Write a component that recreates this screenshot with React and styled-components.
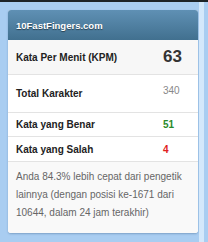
import styled, { createGlobalStyle } from "styled-components";

const Global = createGlobalStyle`
  html, body {
    margin: 0;
    padding: 0;
    background: #a9cdf1;
    font-family: "Liberation Sans", Arial, sans-serif;
  }
`;

const Page = styled.div`
  width: 208px;
  height: 242px;
  display: flex;
  flex-direction: column;
  overflow: hidden;
`;

const TopLine = styled.div`
  height: 2px;
  background: #1d2328;
`;

const Body = styled.div`
  flex: 1;
  display: flex;
`;

const Column = styled.div`
  width: 199px;
  padding: 8px 0 0 8px;
  box-sizing: border-box;
`;

const Strip = styled.div`
  width: 5px;
  background: #d4e8fb;
`;

const Card = styled.div`
  width: 190px;
  background: #fff;
  border-radius: 3px;
  box-shadow: 0 1px 2px rgba(40, 80, 120, 0.35);
  overflow: hidden;
`;

const Header = styled.div`
  height: 30px;
  display: flex;
  align-items: center;
  padding-left: 8px;
  background: linear-gradient(#5f90b4, #41708f);
  color: #fff;
  font-weight: bold;
  font-size: 9.5px;
  text-shadow: 0 1px 1px rgba(0, 0, 0, 0.5);
`;

const Row = styled.div`
  height: ${(p) => p.h}px;
  display: flex;
  align-items: center;
  justify-content: space-between;
  padding: 0 0 0 8px;
  border-bottom: 1px solid #e3e3e3;
  background: ${(p) => (p.shade ? "#f7f7f7" : "#fff")};
  box-sizing: border-box;
`;

const Label = styled.span`
  font-weight: bold;
  font-size: 10px;
  color: #222;
`;

const Value = styled.span`
  width: 35px;
  font-size: ${(p) => p.size || 10}px;
  font-weight: ${(p) => (p.bold ? "bold" : "normal")};
  color: ${(p) => p.color || "#333"};
  margin-top: ${(p) => p.lift || 0}px;
`;

const Footer = styled.div`
  height: 71px;
  background: #f9f9f9;
  padding: 6px 6px 0 8px;
  box-sizing: border-box;
  font-size: 10px;
  line-height: 18px;
  color: #666;
`;

export default function App() {
  return (
    <Page>
      <Global />
      <TopLine />
      <Body>
        <Column>
          <Card>
            <Header>10FastFingers.com</Header>
            <Row h={35} shade>
              <Label>Kata Per Menit (KPM)</Label>
              <Value size={17} bold color="#333">63</Value>
            </Row>
            <Row h={38}>
              <Label>Total Karakter</Label>
              <Value color="#888" lift={-6}>340</Value>
            </Row>
            <Row h={24}>
              <Label>Kata yang Benar</Label>
              <Value bold color="#2a8a2a">51</Value>
            </Row>
            <Row h={25}>
              <Label>Kata yang Salah</Label>
              <Value bold color="#e02020">4</Value>
            </Row>
            <Footer>
              Anda 84.3% lebih cepat dari pengetik lainnya (dengan posisi ke-1671 dari 10644, dalam 24 jam terakhir)
            </Footer>
          </Card>
        </Column>
        <Strip />
      </Body>
    </Page>
  );
}
